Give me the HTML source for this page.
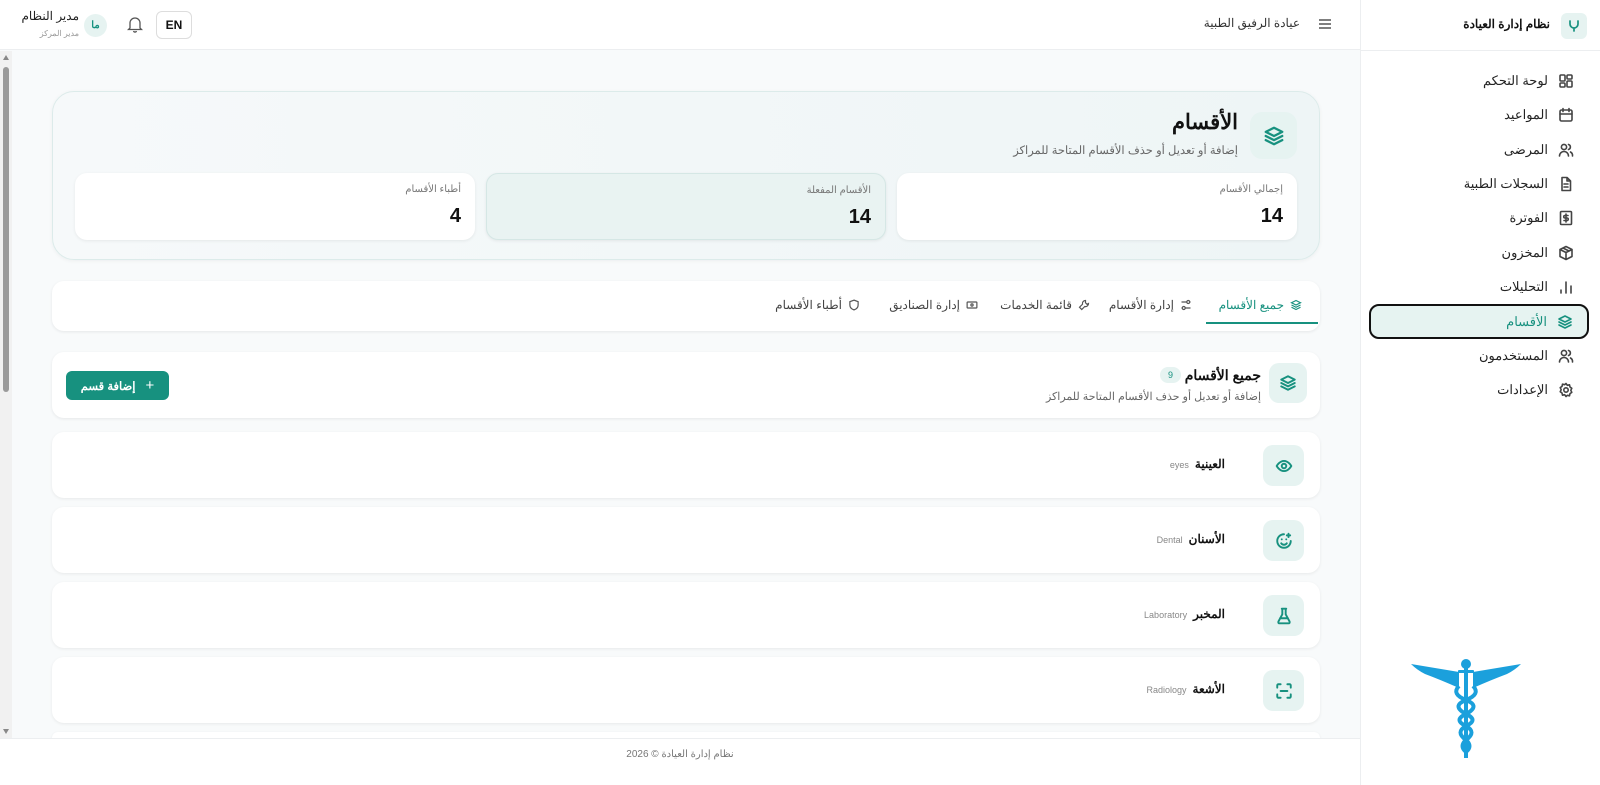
<!DOCTYPE html>
<html lang="ar" dir="rtl" style="overflow:hidden;width:1600px;height:785px"><head><meta charset="utf-8"><style>
*{box-sizing:border-box;margin:0;padding:0}
body{width:1600px;height:785px;overflow:hidden;background:#f8fafb;font-family:"Liberation Sans","Noto Sans CJK SC",sans-serif;color:#111;position:relative}
.abs{position:absolute}
.side{position:absolute;right:0;top:0;width:240px;height:785px;background:#fff;border-left:1px solid #eceef0}
.nav{position:absolute;right:12px;width:218px;height:34px;display:flex;align-items:center;gap:10px;padding-right:14px;font-size:13px;color:#222}
.nav svg{width:16px;height:16px;stroke:#444;fill:none;stroke-width:1.6;stroke-linecap:round;stroke-linejoin:round}
.card{position:absolute;background:#fff;border-radius:12px;box-shadow:0 1px 3px rgba(0,0,0,.08)}
.ico{position:absolute;background:#e6f3f1;border-radius:12px;display:flex;align-items:center;justify-content:center}
.ico svg{fill:none;stroke:#17917f;stroke-width:1.7;stroke-linecap:round;stroke-linejoin:round}
.stat{position:absolute;top:173px;width:400px;height:67px;background:#fff;border-radius:12px;box-shadow:0 1px 3px rgba(0,0,0,.07)}
.stat .l{position:absolute;right:14px;top:11px;font-size:10px;color:#777}
.stat .n{position:absolute;right:14px;top:32px;font-size:20px;font-weight:bold;color:#111;font-family:"Liberation Sans",sans-serif}
.tab{position:absolute;top:298px;font-size:12px;color:#444;display:flex;align-items:center;gap:6px}
.tab svg{width:12px;height:12px;fill:none;stroke:#555;stroke-width:1.6}
.row{position:absolute;left:52px;width:1268px;height:66px;background:#fff;border-radius:12px;box-shadow:0 1px 3px rgba(0,0,0,.07)}
.row .t{position:absolute;right:95px;top:25px;font-size:12px;font-weight:bold;display:flex;align-items:baseline;gap:6px}
.row .t span{font-size:9px;color:#888;font-weight:normal}
.row .ico{right:16px;top:13px;width:41px;height:41px;border-radius:10px}
</style></head><body>
<!-- header -->
<div class="abs" style="left:0;top:0;width:1360px;height:50px;background:#fff;border-bottom:1px solid #eceef0"></div>
<div class="abs" style="right:300px;top:16px;font-size:12px;color:#333">عيادة الرفيق الطبية</div>
<svg class="abs" style="left:1318px;top:17px" width="14" height="14" viewBox="0 0 14 14" stroke="#555" stroke-width="1.4"><path d="M1 3h12M1 7h12M1 11h12"/></svg>
<div class="abs" style="left:156px;top:11px;width:36px;height:28px;border:1px solid #ddd;border-radius:6px;font-size:12px;font-weight:bold;text-align:center;line-height:26px">EN</div>
<svg class="abs" style="left:127px;top:16px" width="16" height="17" viewBox="0 0 16 17" fill="none" stroke="#555" stroke-width="1.3"><path d="M3 12V7a5 5 0 0110 0v5l1.5 1.5h-13z M6.5 15a1.6 1.6 0 003 0"/></svg>
<div class="abs" style="left:84px;top:14px;width:23px;height:23px;border-radius:50%;background:#e6f3f1;color:#17917f;font-size:10px;font-weight:bold;text-align:center;line-height:23px">ما</div>
<div class="abs" style="right:1521px;top:9px;font-size:12px;color:#222">مدير النظام</div>
<div class="abs" style="right:1521px;top:29px;font-size:8px;color:#999">مدير المركز</div>
<!-- scrollbar -->
<div class="abs" style="left:0;top:51px;width:12px;height:687px;background:#f1f1f1"></div>
<div class="abs" style="left:3px;top:67px;width:6px;height:325px;background:#9a9a9a;border-radius:3px"></div>
<div class="abs" style="left:3px;top:55px;width:0;height:0;border-left:3px solid transparent;border-right:3px solid transparent;border-bottom:5px solid #888"></div>
<div class="abs" style="left:3px;top:729px;width:0;height:0;border-left:3px solid transparent;border-right:3px solid transparent;border-top:5px solid #888"></div>

<!-- sidebar -->
<div class="side">
 <div class="abs" style="left:0;top:0;width:240px;height:51px;border-bottom:1px solid #eceef0"></div>
 <div class="ico" style="right:13px;top:13px;width:26px;height:26px;border-radius:6px"><svg width="14" height="14" viewBox="0 0 14 14"><path d="M3 2v3a4 4 0 008 0V2M7 9v3"/></svg></div>
 <div class="abs" style="right:50px;top:17px;font-size:12px;font-weight:bold">نظام إدارة العيادة</div>
 <div class="nav" style="top:64px"><svg viewBox="0 0 16 16"><rect x="2" y="2" width="5" height="6" rx="1"/><rect x="9" y="2" width="5" height="4" rx="1"/><rect x="9" y="8" width="5" height="6" rx="1"/><rect x="2" y="10" width="5" height="4" rx="1"/></svg>لوحة التحكم</div>
 <div class="nav" style="top:98px"><svg viewBox="0 0 16 16"><rect x="2" y="3" width="12" height="11" rx="1.5"/><path d="M2 7h12M5 1.5v3M11 1.5v3"/></svg>المواعيد</div>
 <div class="nav" style="top:133px"><svg viewBox="0 0 16 16"><circle cx="6" cy="5" r="2.6"/><path d="M1.5 14a4.5 4.5 0 019 0M10.5 2.5a2.6 2.6 0 010 5M12.5 10a4 4 0 012 4"/></svg>المرضى</div>
 <div class="nav" style="top:167px"><svg viewBox="0 0 16 16"><path d="M4 1.5h5l3.5 3.5v9.5h-8.5zM9 1.5V5h3.5M6 8h4M6 11h4"/></svg>السجلات الطبية</div>
 <div class="nav" style="top:201px"><svg viewBox="0 0 16 16"><rect x="2.5" y="1.5" width="11" height="13" rx="1"/><path d="M10 5.5H7a1.2 1.2 0 000 2.5h2a1.2 1.2 0 010 2.5H6M8 4v8"/></svg>الفوترة</div>
 <div class="nav" style="top:236px"><svg viewBox="0 0 16 16"><path d="M8 1.5l6 3v7l-6 3-6-3v-7zM2 4.5l6 3 6-3M8 7.5v7M5 3l6 3"/></svg>المخزون</div>
 <div class="nav" style="top:270px"><svg viewBox="0 0 16 16"><path d="M3 14v-3M8 14V3M13 14V7"/></svg>التحليلات</div>
 <div class="nav" style="top:304px;right:11px;width:220px;height:35px;background:#e6f3f1;border:2px solid #111;border-radius:10px;color:#17917f"><svg viewBox="0 0 16 16" style="stroke:#17917f"><path d="M8 2l6 3-6 3-6-3zM2 8l6 3 6-3M2 11l6 3 6-3"/></svg>الأقسام</div>
 <div class="nav" style="top:339px"><svg viewBox="0 0 16 16"><circle cx="6" cy="5" r="2.6"/><path d="M1.5 14a4.5 4.5 0 019 0M10.5 2.5a2.6 2.6 0 010 5M12.5 10a4 4 0 012 4"/></svg>المستخدمون</div>
 <div class="nav" style="top:373px"><svg viewBox="0 0 16 16"><circle cx="8" cy="8" r="2.2"/><path d="M8 1.5l1.3 1.8 2.2-.5.5 2.2 1.8 1.3-1 2 1 2-1.8 1.3-.5 2.2-2.2-.5L8 14.5l-1.3-1.8-2.2.5-.5-2.2L2.2 9.7l1-2-1-2 1.8-1.3.5-2.2 2.2.5z"/></svg>الإعدادات</div>
 <!-- caduceus -->
 <svg class="abs" style="left:50px;top:658px" width="110" height="102" viewBox="0 0 110 102" fill="#1ba0dc" stroke="none">
  <circle cx="55" cy="6" r="5"/>
  <rect x="53" y="10" width="4" height="90"/>
  <rect x="47" y="12" width="16" height="3" rx="1"/>
  <path d="M0 6 L48 14 L48 30 Q30 22 14 16 Q6 12 0 6z"/>
  <path d="M110 6 L62 14 L62 30 Q80 22 96 16 Q104 12 110 6z"/>
  <path d="M48 28 Q40 36 55 42 Q70 48 55 56 Q42 62 55 68 Q66 74 55 82 Q48 88 55 94" fill="none" stroke="#1ba0dc" stroke-width="4"/>
  <path d="M62 28 Q70 36 55 42 Q40 48 55 56 Q68 62 55 68 Q44 74 55 82 Q62 88 55 94" fill="none" stroke="#1ba0dc" stroke-width="4"/>
 </svg>
</div>

<!-- hero -->
<div class="abs" style="left:52px;top:91px;width:1268px;height:169px;border-radius:22px;background:linear-gradient(90deg,#f6f9fa,#eef5f6);border:1px solid #dcebea;box-shadow:0 1px 4px rgba(0,0,0,.05)"></div>
<div class="ico" style="left:1250px;top:112px;width:47px;height:47px"><svg width="22" height="22" viewBox="0 0 16 16"><path d="M8 2l6 3-6 3-6-3zM2 8l6 3 6-3M2 11l6 3 6-3"/></svg></div>
<div class="abs" style="right:362px;top:110px;font-size:21px;font-weight:bold">الأقسام</div>
<div class="abs" style="right:362px;top:143px;font-size:11.5px;color:#666">إضافة أو تعديل أو حذف الأقسام المتاحة للمراكز</div>
<div class="stat" style="left:897px"><div class="l">إجمالي الأقسام</div><div class="n">14</div></div>
<div class="stat" style="left:486px;background:#e9f3f2;border:1px solid #d5e7e5"><div class="l">الأقسام المفعلة</div><div class="n">14</div></div>
<div class="stat" style="left:75px"><div class="l">أطباء الأقسام</div><div class="n">4</div></div>

<!-- tabs -->
<div class="card" style="left:52px;top:281px;width:1268px;height:50px"></div>
<div class="abs" style="left:1206px;top:322px;width:112px;height:2px;background:#17917f"></div>
<div class="tab" style="right:298px;color:#17917f"><svg viewBox="0 0 16 16" style="stroke:#17917f"><path d="M8 2l6 3-6 3-6-3zM2 8l6 3 6-3M2 11l6 3 6-3"/></svg>جميع الأقسام</div>
<div class="tab" style="right:408px"><svg viewBox="0 0 16 16"><path d="M2 4h7M13 4h1M2 12h1M7 12h7"/><circle cx="11" cy="4" r="2"/><circle cx="5" cy="12" r="2"/></svg>إدارة الأقسام</div>
<div class="tab" style="right:510px"><svg viewBox="0 0 16 16"><path d="M10 2a4 4 0 00-4 5L2 11l3 3 4-4a4 4 0 005-4l-2 1-2-2z"/></svg>قائمة الخدمات</div>
<div class="tab" style="right:622px"><svg viewBox="0 0 16 16"><rect x="1.5" y="4" width="13" height="8" rx="1"/><circle cx="8" cy="8" r="1.5"/></svg>إدارة الصناديق</div>
<div class="tab" style="right:740px"><svg viewBox="0 0 16 16"><path d="M8 1.5l5.5 2v4.5c0 3.5-2.5 5.5-5.5 6.5-3-1-5.5-3-5.5-6.5V3.5z"/></svg>أطباء الأقسام</div>

<!-- section header -->
<div class="card" style="left:52px;top:352px;width:1268px;height:66px"></div>
<div class="ico" style="left:1269px;top:363px;width:38px;height:40px;border-radius:10px"><svg width="18" height="18" viewBox="0 0 16 16"><path d="M8 2l6 3-6 3-6-3zM2 8l6 3 6-3M2 11l6 3 6-3"/></svg></div>
<div class="abs" style="right:339px;top:367px;font-size:14px;font-weight:bold">جميع الأقسام</div>
<div class="abs" style="left:1160px;top:367px;width:21px;height:16px;border-radius:8px;background:#e6f3f1;color:#17917f;font-size:9px;text-align:center;line-height:16px">9</div>
<div class="abs" style="right:339px;top:390px;font-size:11px;color:#666">إضافة أو تعديل أو حذف الأقسام المتاحة للمراكز</div>
<div class="abs" style="left:66px;top:371px;width:103px;height:29px;background:#17917f;border-radius:6px;color:#fff;font-size:11.5px;font-weight:bold;display:flex;align-items:center;justify-content:center;gap:10px"><span style="font-size:15px;font-weight:normal">+</span>إضافة قسم</div>

<!-- rows -->
<div class="row" style="top:432px"><div class="ico"><svg width="18" height="18" viewBox="0 0 16 16"><path d="M1.5 8s2.5-4.5 6.5-4.5S14.5 8 14.5 8 12 12.5 8 12.5 1.5 8 1.5 8z"/><circle cx="8" cy="8" r="2"/></svg></div><div class="t">العينية <span>eyes</span></div></div>
<div class="row" style="top:507px"><div class="ico"><svg width="18" height="18" viewBox="0 0 16 16"><path d="M14 8A6 6 0 118 2M5.5 10a3 3 0 005 0M6 6.5h.01M10 6.5h.01M12 1.5v3M10.5 3h3"/></svg></div><div class="t">الأسنان <span>Dental</span></div></div>
<div class="row" style="top:582px"><div class="ico"><svg width="18" height="18" viewBox="0 0 16 16"><path d="M6 1.5h4M6.5 1.5v5L3 13a1 1 0 001 1.5h8a1 1 0 001-1.5L9.5 6.5v-5M4.5 10h7"/></svg></div><div class="t">المخبر <span>Laboratory</span></div></div>
<div class="row" style="top:657px"><div class="ico"><svg width="18" height="18" viewBox="0 0 16 16"><path d="M2 5V3a1 1 0 011-1h2M11 2h2a1 1 0 011 1v2M14 11v2a1 1 0 01-1 1h-2M5 14H3a1 1 0 01-1-1v-2M5 8h6"/></svg></div><div class="t">الأشعة <span>Radiology</span></div></div>
<div class="row" style="top:732px;height:6px;border-radius:12px 12px 0 0"></div>
<div class="abs" style="left:0;top:738px;width:1360px;height:47px;background:#fff;border-top:1px solid #eceef0;text-align:center;font-size:10px;color:#777;line-height:31px">نظام إدارة العيادة © 2026</div>
</body></html>
